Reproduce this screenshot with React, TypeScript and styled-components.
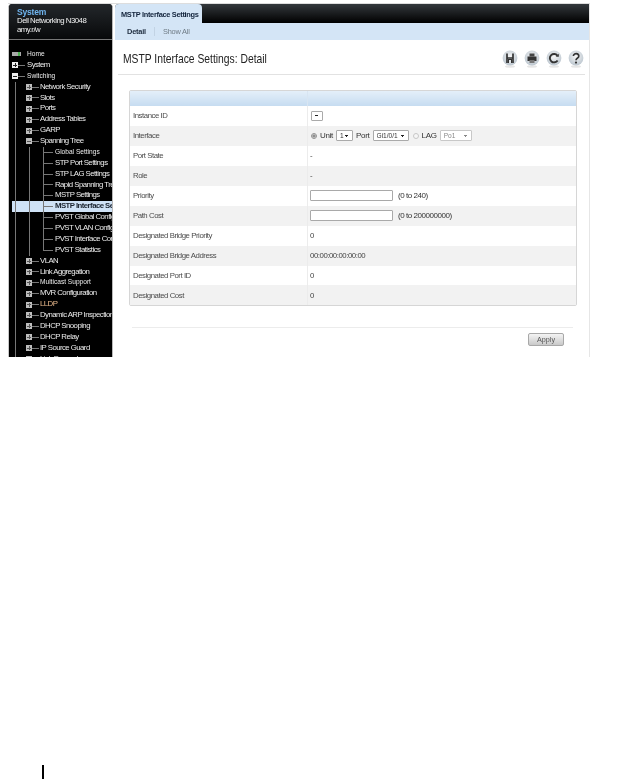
import React from 'react';
import styled, { createGlobalStyle } from 'styled-components';

const Global = createGlobalStyle`
  html, body { margin: 0; padding: 0; background: #fff; }
  body { font-family: "Liberation Sans", Arial, sans-serif; }
`;

const Page = styled.div`
  width: 641px;
  height: 779px;
  overflow: hidden;
  display: flex;
  flex-direction: column;
`;
const Shot = styled.div`
  width: 582px;
  height: 354px;
  margin: 3px 0 0 8px;
  display: flex;
  overflow: hidden;
  background: #fff;
  box-shadow: inset 0 1px 0 #ddd;
  filter: blur(0.4px);
`;
const Sidebar = styled.aside`
  width: 103px;
  flex: none;
  margin-top: 1px;
  background: #000;
  border-left: 1px solid #c8c8c8;
  border-right: 1px solid #b9b9b9;
  border-radius: 4px 4px 0 0;
  overflow: hidden;
`;
const Brand = styled.div`
  height: 36px;
  padding: 4px 0 0 8px;
  box-sizing: border-box;
  background: linear-gradient(#23272b, #08090a);
  border-bottom: 1px solid #777;
  color: #f0f0f0;
  font-size: 7.8px;
  letter-spacing: -0.5px;
  line-height: 8.5px;
`;
const BrandName = styled.div`
  color: #6fb4ee;
  font-weight: bold;
  font-size: 8.5px;
  letter-spacing: -0.2px;
  line-height: 9px;
`;
const Tree = styled.div`
  padding: 9px 0 0 3px;
`;
const Row = styled.div<{ $selected?: boolean; $small?: boolean; $orange?: boolean }>`
  height: 10.88px;
  display: flex;
  align-items: stretch;
  white-space: nowrap;
  font-size: ${(p) => (p.$small ? 6.6 : 7.8)}px;
  letter-spacing: ${(p) => (p.$small ? 0 : -0.55)}px;
  line-height: 10.88px;
  background: ${(p) => (p.$selected ? '#cfe2f6' : 'transparent')};
  color: ${(p) => (p.$selected ? '#1b2430' : p.$orange ? '#e9b98c' : '#ececec')};
  font-weight: ${(p) => (p.$selected ? 'bold' : 'normal')};
`;
const Guide = styled.span`
  flex: none;
  width: 14px;
  background: linear-gradient(#777, #777) 3px 0 / 1px 100% no-repeat;
`;
const Branch = styled.span<{ $last?: boolean }>`
  flex: none;
  width: 15px;
  background:
    linear-gradient(#777, #777) 3px 0 / 1px ${(p) => (p.$last ? '50%' : '100%')} no-repeat,
    linear-gradient(#777, #777) 3px 50% / 10px 1px no-repeat;
`;
const Node = styled.span<{ $top?: boolean }>`
  flex: none;
  width: ${(p) => (p.$top ? 15 : 14)}px;
  display: flex;
  align-items: center;
  background: linear-gradient(#777, #777) 6px 50% / 7px 1px no-repeat;
`;
const Box = styled.span<{ $top?: boolean; $open?: boolean }>`
  width: 6px;
  height: 6px;
  box-sizing: border-box;
  background: ${(p) => (p.$top ? '#eeeeee' : '#bdbdbd')};
  display: flex;
  align-items: center;
  justify-content: center;
  position: relative;
  &::before {
    content: '';
    width: 4px;
    height: 1px;
    background: ${(p) => (p.$top ? '#222' : '#555')};
  }
  &::after {
    content: '';
    display: ${(p) => (p.$open ? 'none' : 'block')};
    position: absolute;
    left: 2.5px;
    top: 1px;
    width: 1px;
    height: 4px;
    background: ${(p) => (p.$top ? '#222' : '#555')};
  }
`;
const HomeDevice = styled.span`
  flex: none;
  width: 9px;
  height: 4px;
  margin: 3px 6px 0 0;
  background: linear-gradient(90deg, #a8a8a8 70%, #4caf50 70%, #4caf50 85%, #a8a8a8 85%);
`;

const Main = styled.main`
  flex: 1;
  min-width: 0;
  margin: 1px 0 0 2px;
  border-right: 1px solid #e6e6e6;
  display: flex;
  flex-direction: column;
`;
const TabBar = styled.div`
  height: 19px;
  flex: none;
  display: flex;
  background: linear-gradient(#33383c, #000);
  border-radius: 4px 0 0 0;
`;
const ActiveTab = styled.div`
  width: 87px;
  background: #d4e5f6;
  border-radius: 4px 4px 0 0;
  color: #12233b;
  font-size: 7.4px;
  letter-spacing: -0.3px;
  font-weight: bold;
  line-height: 21px;
  padding-left: 6px;
  box-sizing: border-box;
  white-space: nowrap;
`;
const SubNav = styled.nav`
  height: 17px;
  flex: none;
  background: #d4e5f6;
  display: flex;
  align-items: center;
  padding-left: 12px;
  font-size: 7.4px;
  letter-spacing: -0.2px;
`;
const SubLink = styled.span<{ $active?: boolean }>`
  color: ${(p) => (p.$active ? '#1d2b3d' : '#6f7b85')};
  font-weight: ${(p) => (p.$active ? 'bold' : 'normal')};
  padding-right: 8px;
  margin-right: 8px;
  border-right: ${(p) => (p.$active ? '1px solid #c2d3e4' : 'none')};
`;
const TitleBar = styled.header`
  height: 35px;
  flex: none;
  margin: 0 4px 0 3px;
  padding: 0 1px 0 5px;
  box-sizing: border-box;
  border-bottom: 1px solid #e2e2e2;
  display: flex;
  align-items: center;
  justify-content: space-between;
`;
const Title = styled.h1`
  margin: 4px 0 0;
  font-size: 12.6px;
  font-weight: normal;
  color: #222;
  white-space: nowrap;
  transform: scaleX(0.82);
  transform-origin: left center;
`;
const Tools = styled.div`
  display: flex;
  gap: 6px;
  margin-top: 3px;
`;
const ToolIcon = styled.svg`
  width: 16px;
  height: 18px;
  display: block;
`;
const Body = styled.div`
  padding: 15px 12px 0 14px;
`;
const Panel = styled.section`
  width: 448px;
  border: 1px solid #d6d6d6;
  border-radius: 2px;
  box-sizing: border-box;
`;
const PanelHead = styled.div`
  height: 15px;
  background: linear-gradient(#e4eff9, #c6dcf1);
  display: grid;
  grid-template-columns: 178px 1fr;
`;
const HeadDivider = styled.span`
  border-right: 1px solid #d8e5f2;
`;
const FieldRow = styled.div<{ $shade?: boolean }>`
  height: 19.95px;
  display: grid;
  grid-template-columns: 178px 1fr;
  align-items: stretch;
  background: ${(p) => (p.$shade ? '#f2f2f2' : '#fff')};
  font-size: 7.8px;
  letter-spacing: -0.45px;
  color: #4b4b4b;
`;
const Label = styled.div`
  display: flex;
  align-items: center;
  padding-left: 3px;
  border-right: 1px solid #ececec;
`;
const Value = styled.div`
  display: flex;
  align-items: center;
  padding-left: 2px;
  gap: 3px;
  color: #444;
`;
const Select = styled.select<{ $w: number }>`
  appearance: none;
  width: ${(p) => p.$w}px;
  height: 11px;
  padding: 0 0 0 3px;
  font: 6.6px "Liberation Sans", Arial, sans-serif;
  color: #333;
  border: 1px solid #aaa;
  border-radius: 1px;
  background-color: #fff;
  background-image:
    linear-gradient(45deg, transparent 50%, #222 50%),
    linear-gradient(135deg, #222 50%, transparent 50%);
  background-size: 2px 2px;
  background-repeat: no-repeat;
  background-position: right 5px center, right 3px center;
  &:disabled {
    color: #888;
    border-color: #c8c8c8;
    opacity: 1;
    background-image:
      linear-gradient(45deg, transparent 50%, #888 50%),
      linear-gradient(135deg, #888 50%, transparent 50%);
  }
`;
const SingleSelect = styled(Select)`
  margin-left: 1px;
  height: 10px;
`;
const Radio = styled.input<{ $dim?: boolean }>`
  width: 6px;
  height: 6px;
  margin: 0 0 0 1px;
  accent-color: #8f8f8f;
  filter: grayscale(1);
  opacity: ${(p) => (p.$dim ? 0.35 : 1)};
`;
const TextBox = styled.input`
  width: 83px;
  height: 11px;
  box-sizing: border-box;
  border: 1px solid #a9a9a9;
  border-radius: 1px;
  margin-right: 2px;
`;
const Strong = styled.span`
  color: #333;
  font-size: 8px;
  letter-spacing: -0.3px;
`;
const Hint = styled.span`
  color: #333;
  font-size: 8px;
  letter-spacing: -0.45px;
`;
const Footer = styled.div`
  margin-top: 21px;
  width: 441px;
  margin-left: 3px;
  padding-top: 5px;
  border-top: 1px solid #ececec;
  display: flex;
  justify-content: flex-end;
  box-sizing: border-box;
`;
const ApplyButton = styled.button`
  width: 36px;
  height: 13px;
  margin-right: 9px;
  padding: 0;
  border: 1px solid #a8a8a8;
  border-radius: 2px;
  background: linear-gradient(#f4f4f4, #c9c9c9);
  font: 7.2px "Liberation Sans", Arial, sans-serif;
  color: #555;
`;
const PageMark = styled.div`
  width: 2px;
  height: 14px;
  background: #000;
  margin: 408px 0 0 42px;
  flex: none;
`;

type Item = {
  label: string;
  level: 0 | 1 | 2;
  open?: boolean;
  small?: boolean;
  selected?: boolean;
  orange?: boolean;
  last?: boolean;
};

const items: Item[] = [
  { label: 'System', level: 0 },
  { label: 'Switching', level: 0, open: true, small: true },
  { label: 'Network Security', level: 1 },
  { label: 'Slots', level: 1 },
  { label: 'Ports', level: 1 },
  { label: 'Address Tables', level: 1 },
  { label: 'GARP', level: 1 },
  { label: 'Spanning Tree', level: 1, open: true },
  { label: 'Global Settings', level: 2, small: true },
  { label: 'STP Port Settings', level: 2 },
  { label: 'STP LAG Settings', level: 2 },
  { label: 'Rapid Spanning Tree', level: 2 },
  { label: 'MSTP Settings', level: 2 },
  { label: 'MSTP Interface Settings', level: 2, selected: true },
  { label: 'PVST Global Configuration', level: 2 },
  { label: 'PVST VLAN Configuration', level: 2 },
  { label: 'PVST Interface Configuration', level: 2 },
  { label: 'PVST Statistics', level: 2, last: true },
  { label: 'VLAN', level: 1 },
  { label: 'Link Aggregation', level: 1 },
  { label: 'Multicast Support', level: 1, small: true },
  { label: 'MVR Configuration', level: 1 },
  { label: 'LLDP', level: 1, orange: true },
  { label: 'Dynamic ARP Inspection', level: 1 },
  { label: 'DHCP Snooping', level: 1 },
  { label: 'DHCP Relay', level: 1 },
  { label: 'IP Source Guard', level: 1 },
  { label: 'Link Dependency', level: 1 },
];

function TreeRow({ item }: { item: Item }) {
  const { level } = item;
  return (
    <Row $selected={item.selected} $small={item.small} $orange={item.orange}>
      {level >= 1 && <Guide />}
      {level === 2 && <Guide />}
      {level === 2 ? (
        <Branch $last={item.last} />
      ) : (
        <Node $top={level === 0}>
          <Box $top={level === 0} $open={item.open} />
        </Node>
      )}
      {item.label}
    </Row>
  );
}

function Tool({ children }: { children: React.ReactNode }) {
  return (
    <ToolIcon viewBox="0 0 16 18">
      <defs>
        <radialGradient id="disc" cx="50%" cy="40%" r="60%">
          <stop offset="0%" stopColor="#f6f6f6" />
          <stop offset="100%" stopColor="#bcc6cf" />
        </radialGradient>
      </defs>
      <ellipse cx="8" cy="16.5" rx="5" ry="1.2" fill="#e6e6e6" />
      <circle cx="8" cy="8" r="7.4" fill="url(#disc)" />
      {children}
    </ToolIcon>
  );
}

export default function App() {
  return (
    <Page>
      <Global />
      <Shot>
        <Sidebar>
          <Brand>
            <BrandName>System</BrandName>
            <div>Dell Networking N3048</div>
            <div>amy.r/w</div>
          </Brand>
          <Tree>
            <Row $small>
              <HomeDevice />
              Home
            </Row>
            {items.map((item) => (
              <TreeRow key={item.label} item={item} />
            ))}
          </Tree>
        </Sidebar>
        <Main>
          <TabBar>
            <ActiveTab>MSTP Interface Settings</ActiveTab>
          </TabBar>
          <SubNav>
            <SubLink $active>Detail</SubLink>
            <SubLink>Show All</SubLink>
          </SubNav>
          <TitleBar>
            <Title>MSTP Interface Settings: Detail</Title>
            <Tools>
              <Tool>
                <path d="M5 3.5v9.5M11 3.5v9.5M5 8h6" stroke="#333" strokeWidth="1.7" fill="none" />
                <path d="M6 9h4v4H6z" fill="#333" />
                <path d="M7 10h2v3H7z" fill="#dfe3e7" />
              </Tool>
              <Tool>
                <path d="M5.5 3.5h5v3h-5z" fill="#444" />
                <path d="M3.5 6.5h9v4.5h-9z" fill="#333" />
                <path d="M5.5 10h5v3h-5z" fill="#777" />
              </Tool>
              <Tool>
                <path d="M11.4 5.6A4.2 4.2 0 1 0 11.6 10.4" stroke="#333" strokeWidth="1.9" fill="none" />
                <path d="M9.8 6.8h3v-3z" fill="#333" />
              </Tool>
              <Tool>
                <path
                  d="M5.4 6a2.7 2.4 0 1 1 4.2 2c-1 .7-1.6 1.1-1.6 2.2"
                  stroke="#333"
                  strokeWidth="1.7"
                  fill="none"
                />
                <circle cx="8" cy="12.6" r="1.1" fill="#333" />
              </Tool>
            </Tools>
          </TitleBar>
          <Body>
            <Panel>
              <PanelHead>
                <HeadDivider />
              </PanelHead>
              <FieldRow>
                <Label>Instance ID</Label>
                <Value>
                  <SingleSelect $w={12} />
                </Value>
              </FieldRow>
              <FieldRow $shade>
                <Label>Interface</Label>
                <Value>
                  <Radio type="radio" name="intf" defaultChecked />
                  <Strong>Unit</Strong>
                  <Select $w={17}>
                    <option>1</option>
                  </Select>
                  <Strong>Port</Strong>
                  <Select $w={36}>
                    <option>Gi1/0/1</option>
                  </Select>
                  <Radio $dim type="radio" name="intf" />
                  <Strong>LAG</Strong>
                  <Select $w={32} disabled>
                    <option>Po1</option>
                  </Select>
                </Value>
              </FieldRow>
              <FieldRow>
                <Label>Port State</Label>
                <Value>-</Value>
              </FieldRow>
              <FieldRow $shade>
                <Label>Role</Label>
                <Value>-</Value>
              </FieldRow>
              <FieldRow>
                <Label>Priority</Label>
                <Value>
                  <TextBox />
                  <Hint>(0 to 240)</Hint>
                </Value>
              </FieldRow>
              <FieldRow $shade>
                <Label>Path Cost</Label>
                <Value>
                  <TextBox />
                  <Hint>(0 to 200000000)</Hint>
                </Value>
              </FieldRow>
              <FieldRow>
                <Label>Designated Bridge Priority</Label>
                <Value>0</Value>
              </FieldRow>
              <FieldRow $shade>
                <Label>Designated Bridge Address</Label>
                <Value>00:00:00:00:00:00</Value>
              </FieldRow>
              <FieldRow>
                <Label>Designated Port ID</Label>
                <Value>0</Value>
              </FieldRow>
              <FieldRow $shade>
                <Label>Designated Cost</Label>
                <Value>0</Value>
              </FieldRow>
            </Panel>
            <Footer>
              <ApplyButton>Apply</ApplyButton>
            </Footer>
          </Body>
        </Main>
      </Shot>
      <PageMark />
    </Page>
  );
}
